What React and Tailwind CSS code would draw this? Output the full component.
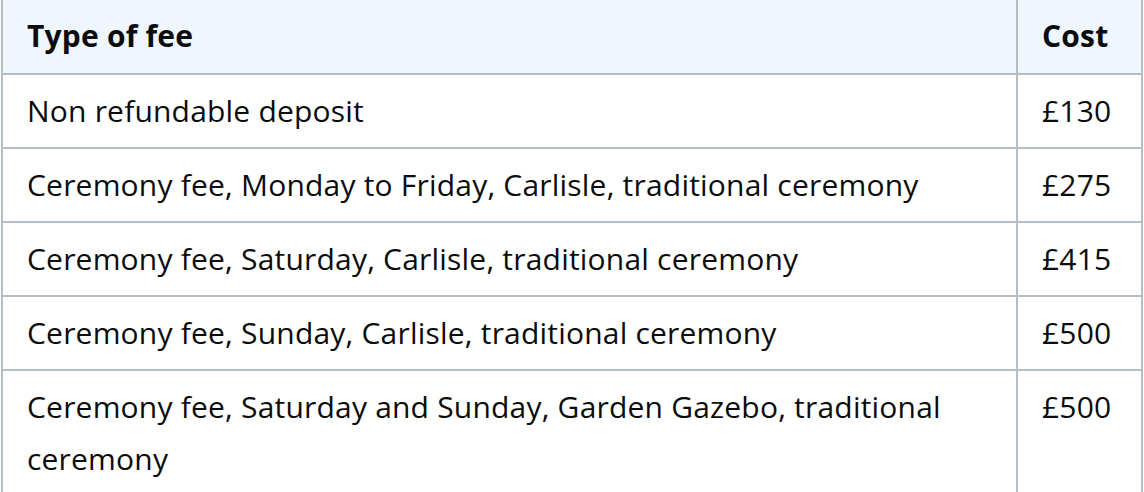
export default function App() {
  const rows = [
    ["Non refundable deposit", "£130"],
    ["Ceremony fee, Monday to Friday, Carlisle, traditional ceremony", "£275"],
    ["Ceremony fee, Saturday, Carlisle, traditional ceremony", "£415"],
    ["Ceremony fee, Sunday, Carlisle, traditional ceremony", "£500"],
    ["Ceremony fee, Saturday and Sunday, Garden Gazebo, traditional ceremony", "£500"],
  ];
  return (
    <div className="bg-white w-[1144px] h-[492px] overflow-hidden" style={{ fontFamily: "'Open Sans', 'Noto Sans', sans-serif" }}>
      <table className="ml-[1px] w-[1142px] border-collapse text-[#0b0c0c] text-[30px] leading-[52px] tracking-[0.2px]">
        <thead>
          <tr className="bg-[#eff6fd]">
            <th className="border-2 border-[#b5bdc5] border-t-0 text-left font-bold pl-[24px] pr-[25px] pt-[9.5px] pb-[11.5px] w-[1015px]">Type of fee</th>
            <th className="border-2 border-[#b5bdc5] border-t-0 text-left font-bold pl-[24px] pr-[25px] pt-[9.5px] pb-[11.5px]">Cost</th>
          </tr>
        </thead>
        <tbody>
          {rows.map(([a, b], i) => (
            <tr key={i}>
              <td className="border-2 border-[#b5bdc5] pl-[24px] pr-[25px] py-[10px] align-top">{a}</td>
              <td className="border-2 border-[#b5bdc5] pl-[24px] pr-[25px] py-[10px] align-top">{b}</td>
            </tr>
          ))}
        </tbody>
      </table>
    </div>
  );
}
